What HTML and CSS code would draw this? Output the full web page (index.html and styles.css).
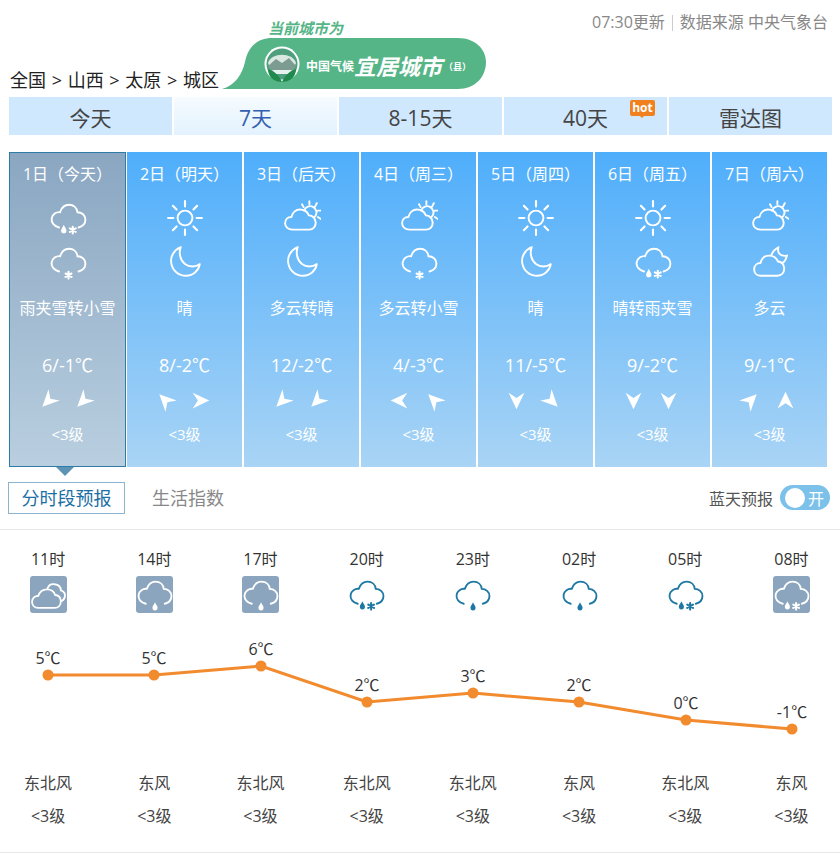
FILE: index.html
```html
<!DOCTYPE html>
<html lang="zh-CN">
<head>
    <meta charset="UTF-8">
    <title>城区天气预报</title>
    <link rel="stylesheet" href="styles.css">
</head>
<body>
    <svg class="sprite" width="0" height="0">
        <defs>
            <path id="cloud-open" d="M9.500 27 C5 26 2 22.500 2.500 18.500 C3 14.500 7 12 10.500 12.500 C12 8 15 5.500 19 5.500 C23.500 5.500 26.500 8.500 27 12.500 C31 12.500 34.500 15.500 34.500 19.500 C34.500 23 32 26 28 27" fill="none" stroke="currentColor" stroke-width="1.800" stroke-linecap="round"/>
            <path id="drop" d="M0 -4.500 C1 -2 2.500 -0.800 2.500 1 A2.500 2.500 0 0 1 -2.500 1 C-2.500 -0.800 -1 -2 0 -4.500 Z" fill="currentColor"/>
            <path id="flake" d="M0 -3.200 V3.200 M-2.800 -1.600 L2.800 1.600 M-2.800 1.600 L2.800 -1.600" fill="none" stroke="currentColor" stroke-width="2" stroke-linecap="round"/>
            <symbol id="i-rain-snow" viewBox="0 0 36 36">
                <use href="#cloud-open"/>
                <use href="#drop" x="14" y="29"/>
                <use href="#flake" x="22.500" y="29.500"/>
            </symbol>
            <symbol id="i-rain" viewBox="0 0 36 36">
                <use href="#cloud-open"/>
                <use href="#drop" x="18.500" y="30"/>
            </symbol>
            <symbol id="i-snow" viewBox="0 0 36 36">
                <use href="#cloud-open"/>
                <use href="#flake" x="18.500" y="30.500"/>
            </symbol>
            <symbol id="i-sun" viewBox="0 0 36 36">
                <circle cx="18" cy="18" r="7" fill="none" stroke="currentColor" stroke-width="1.800"/>
                <path d="M18 2 V7 M18 29 V34 M2 18 H7 M29 18 H34 M6.500 6.500 L10 10 M26 26 L29.500 29.500 M6.500 29.500 L10 26 M26 10 L29.500 6.500" fill="none" stroke="currentColor" stroke-width="2" stroke-linecap="round"/>
            </symbol>
            <symbol id="i-moon" viewBox="0 0 36 36">
                <path d="M14 4 C7 7 4 13 5 19 C6 26 12 31 19 31 C26 31 31 26 32 20 C28 23 22 23 18 20 C13 16 12 9 14 4 Z" fill="none" stroke="currentColor" stroke-width="1.800" stroke-linejoin="round"/>
            </symbol>
            <symbol id="i-cloudy-day" viewBox="0 0 36 36">
                <path d="M9 29 C4.500 29 2 26 2 23 C2 19.500 4.500 17 8 17 C9 12.500 12.500 10 16 10 C20 10 23 12 24.500 15.500 C28 15.500 31 18.500 31 22.500 C31 26 28.500 29 25 29 Z" fill="none" stroke="currentColor" stroke-width="1.800" stroke-linejoin="round"/>
                <path d="M20 11 A6 6 0 1 1 30 17 M25 2 V5 M18 5 L19.500 7.500 M32 4 L30.500 7 M36 11 H33 M36 19 L33 17" fill="none" stroke="currentColor" stroke-width="1.800" stroke-linecap="round"/>
            </symbol>
            <symbol id="i-cloudy-night" viewBox="0 0 36 36">
                <path d="M9 31 C5 31 3 28 3 25 C3 21.500 5.500 19 9 19 C10 14.500 13 12 17 12 C21 12 24 14 25.500 17.500 C29 17.500 31.500 20.500 31.500 24 C31.500 28 29 31 25 31 Z" fill="none" stroke="currentColor" stroke-width="1.800" stroke-linejoin="round"/>
                <path d="M26 4 C24.500 9 27.500 13 34 12 C33 16 31 18.500 29 19 M26 4 C22.500 6 20.500 8 19.500 11" fill="none" stroke="currentColor" stroke-width="1.800" stroke-linecap="round"/>
            </symbol>
            <symbol id="i-overcast" viewBox="0 0 36 36">
                <path d="M8 31 C4 31 2 28 2 25 C2 21.500 5 19 8 19.500 C9.500 15 13 13 16.500 13 C20.500 13 23.500 15.500 24.500 18.500 C28 18.500 30 21.500 30 24.500 C30 28.500 27.500 31 24 31 Z" fill="none" stroke="currentColor" stroke-width="1.800" stroke-linejoin="round"/>
                <path d="M17 12.500 C18 9 21 7.500 24 8 C28 8.500 30 11 30 14 C33 15 34.500 17 34 20 C33.500 22.500 32 24 30 24.500" fill="none" stroke="currentColor" stroke-width="1.800" stroke-linecap="round"/>
            </symbol>
            <symbol id="i-wind" viewBox="0 0 24 24">
                <polygon points="22,12 3,3 9,12 3,21" fill="currentColor"/>
            </symbol>
        </defs>
    </svg>

    <header class="top">
        <div class="crumbs">全国 &gt; 山西 &gt; 太原 &gt; 城区</div>
        <div class="badge">
            <div class="badge-title">当前城市为</div>
            <div class="badge-body">
                <svg class="badge-shape" width="264" height="51" viewBox="0 0 264 51">
                    <path d="M0 51 C14 47 20 36 23 24 C26 9 35 0 50 0 H236 C253 0 264 11 264 24 C264 39 253 51 236 51 Z" fill="#56b587"/>
                </svg>
                <svg class="emblem" width="36" height="38" viewBox="0 0 36 38">
                    <circle cx="18" cy="19" r="17.500" fill="#fff"/>
                    <circle cx="18" cy="19" r="15.500" fill="#4f9f7c"/>
                    <path d="M4 18 C7 7 29 7 32 18 L29 25 H7 Z" fill="#dbe8e2"/>
                    <path d="M4 21 L12 14 L18 18 L25 13 L32 21 L28 27 H8 Z" fill="#7c9c92"/>
                    <path d="M8 25 H28 L24 29 H12 Z" fill="#e6f0ec"/>
                    <path d="M4 24 C10 26 15 30 18 37 C9 37 4 31 4 24 Z M32 24 C26 26 21 30 18 37 C27 37 32 31 32 24 Z" fill="#1f8a4c"/>
                </svg>
                <span class="badge-small">中国气候</span>
                <span class="badge-big">宜居城市</span>
                <span class="badge-tiny">（县）</span>
            </div>
        </div>
        <div class="meta">07:30更新<i></i>数据来源 中央气象台</div>
    </header>

    <nav class="tabs">
        <a>今天</a>
        <a class="on">7天</a>
        <a>8-15天</a>
        <a class="hot-tab">40天<span class="hot">hot</span></a>
        <a>雷达图</a>
    </nav>

    <ul class="days">
        <li class="day today">
            <h3>1日（今天）</h3>
            <svg class="wea"><use href="#i-rain-snow"/></svg>
            <svg class="wea"><use href="#i-snow"/></svg>
            <p class="desc">雨夹雪转小雪</p>
            <p class="temp">6/-1℃</p>
            <div class="winds"><svg class="sw"><use href="#i-wind"/></svg><svg class="sw"><use href="#i-wind"/></svg></div>
            <p class="lvl">&lt;3级</p>
        </li>
        <li class="day">
            <h3>2日（明天）</h3>
            <svg class="wea"><use href="#i-sun"/></svg>
            <svg class="wea"><use href="#i-moon"/></svg>
            <p class="desc">晴</p>
            <p class="temp">8/-2℃</p>
            <div class="winds"><svg class="nw"><use href="#i-wind"/></svg><svg class="e"><use href="#i-wind"/></svg></div>
            <p class="lvl">&lt;3级</p>
        </li>
        <li class="day">
            <h3>3日（后天）</h3>
            <svg class="wea"><use href="#i-cloudy-day"/></svg>
            <svg class="wea"><use href="#i-moon"/></svg>
            <p class="desc">多云转晴</p>
            <p class="temp">12/-2℃</p>
            <div class="winds"><svg class="sw"><use href="#i-wind"/></svg><svg class="sw"><use href="#i-wind"/></svg></div>
            <p class="lvl">&lt;3级</p>
        </li>
        <li class="day">
            <h3>4日（周三）</h3>
            <svg class="wea"><use href="#i-cloudy-day"/></svg>
            <svg class="wea"><use href="#i-snow"/></svg>
            <p class="desc">多云转小雪</p>
            <p class="temp">4/-3℃</p>
            <div class="winds"><svg class="w"><use href="#i-wind"/></svg><svg class="nw"><use href="#i-wind"/></svg></div>
            <p class="lvl">&lt;3级</p>
        </li>
        <li class="day">
            <h3>5日（周四）</h3>
            <svg class="wea"><use href="#i-sun"/></svg>
            <svg class="wea"><use href="#i-moon"/></svg>
            <p class="desc">晴</p>
            <p class="temp">11/-5℃</p>
            <div class="winds"><svg class="s"><use href="#i-wind"/></svg><svg class="se"><use href="#i-wind"/></svg></div>
            <p class="lvl">&lt;3级</p>
        </li>
        <li class="day">
            <h3>6日（周五）</h3>
            <svg class="wea"><use href="#i-sun"/></svg>
            <svg class="wea"><use href="#i-rain-snow"/></svg>
            <p class="desc">晴转雨夹雪</p>
            <p class="temp">9/-2℃</p>
            <div class="winds"><svg class="s"><use href="#i-wind"/></svg><svg class="s"><use href="#i-wind"/></svg></div>
            <p class="lvl">&lt;3级</p>
        </li>
        <li class="day">
            <h3>7日（周六）</h3>
            <svg class="wea"><use href="#i-cloudy-day"/></svg>
            <svg class="wea"><use href="#i-cloudy-night"/></svg>
            <p class="desc">多云</p>
            <p class="temp">9/-1℃</p>
            <div class="winds"><svg class="ne"><use href="#i-wind"/></svg><svg class="n"><use href="#i-wind"/></svg></div>
            <p class="lvl">&lt;3级</p>
        </li>
    </ul>

    <div class="subbar">
        <a class="sub on">分时段预报</a>
        <a class="sub">生活指数</a>
        <div class="sky">
            <span>蓝天预报</span>
            <div class="toggle"><b></b>开</div>
        </div>
    </div>

    <section class="hours">
        <div class="row row-time">
            <span>11时</span><span>14时</span><span>17时</span><span>20时</span><span>23时</span><span>02时</span><span>05时</span><span>08时</span>
        </div>
        <div class="row row-icon">
            <svg class="tile"><use href="#i-overcast"/></svg>
            <svg class="tile"><use href="#i-rain"/></svg>
            <svg class="tile"><use href="#i-rain"/></svg>
            <svg class="line-icon"><use href="#i-rain-snow"/></svg>
            <svg class="line-icon"><use href="#i-rain"/></svg>
            <svg class="line-icon"><use href="#i-rain"/></svg>
            <svg class="line-icon"><use href="#i-rain-snow"/></svg>
            <svg class="tile"><use href="#i-rain-snow"/></svg>
        </div>
        <svg class="chart" width="840" height="130" viewBox="0 0 840 130">
            <polyline points="48,50 154,50 261,41 367,77 473,68 579,77 686,95 792,104" fill="none" stroke="#f28a2e" stroke-width="3"/>
            <g fill="#f28a2e">
                <circle cx="48" cy="50" r="5.500"/>
                <circle cx="154" cy="50" r="5.500"/>
                <circle cx="261" cy="41" r="5.500"/>
                <circle cx="367" cy="77" r="5.500"/>
                <circle cx="473" cy="68" r="5.500"/>
                <circle cx="579" cy="77" r="5.500"/>
                <circle cx="686" cy="95" r="5.500"/>
                <circle cx="792" cy="104" r="5.500"/>
            </g>
            <g class="chart-label" text-anchor="middle">
                <text x="48" y="39">5℃</text>
                <text x="154" y="39">5℃</text>
                <text x="261" y="30">6℃</text>
                <text x="367" y="66">2℃</text>
                <text x="473" y="57">3℃</text>
                <text x="579" y="66">2℃</text>
                <text x="686" y="84">0℃</text>
                <text x="792" y="93">-1℃</text>
            </g>
        </svg>
        <div class="row row-wind">
            <span>东北风</span><span>东风</span><span>东北风</span><span>东北风</span><span>东北风</span><span>东风</span><span>东北风</span><span>东风</span>
        </div>
        <div class="row row-lvl">
            <span>&lt;3级</span><span>&lt;3级</span><span>&lt;3级</span><span>&lt;3级</span><span>&lt;3级</span><span>&lt;3级</span><span>&lt;3级</span><span>&lt;3级</span>
        </div>
    </section>
</body>
</html>
```

FILE: styles.css
```css
* {
    box-sizing: border-box;
}
html, body {
    overflow: hidden;
}
body {
    margin: 0;
    height: 853px;
    font-family: "Open Sans", "Noto Sans CJK SC", sans-serif;
    color: #333;
    background: white;
}
ul, p, h3 {
    margin: 0;
    padding: 0;
    font-weight: normal;
}
.sprite {
    display: block;
    height: 0;
}

/* top */
.top {
    display: flex;
    height: 97px;
    padding: 0 12px 8px 10px;
}
.crumbs {
    align-self: flex-end;
    width: 212px;
    margin-bottom: -3px;
    font-size: 18px;
    line-height: 24px;
    word-spacing: 1px;
    color: #222;
    white-space: nowrap;
}
.badge {
    width: 264px;
}
.badge-title {
    height: 38px;
    padding: 19px 0 0 46px;
    font-size: 15px;
    line-height: 18px;
    font-weight: bold;
    font-style: italic;
    color: #56b587;
}
.badge-body {
    position: relative;
    display: flex;
    align-items: center;
    height: 51px;
    padding: 2px 0 0 84px;
    color: white;
    white-space: nowrap;
}
.badge-shape {
    position: absolute;
    left: 0;
    top: 0;
}
.emblem {
    position: absolute;
    left: 42px;
    top: 7px;
}
.badge-small, .badge-big, .badge-tiny {
    position: relative;
    font-weight: bold;
}
.badge-small {
    margin-top: 3px;
    font-size: 12px;
}
.badge-big {
    font-size: 22px;
    font-style: italic;
}
.badge-tiny {
    margin: 3px 0 0 2px;
    font-size: 9px;
}
.meta {
    margin-left: auto;
    padding-top: 11px;
    font-size: 16px;
    line-height: 22px;
    color: #888;
    white-space: nowrap;
}
.meta i {
    display: inline-block;
    width: 1px;
    height: 16px;
    margin: 0 7px;
    vertical-align: -3px;
    background: #ccc;
}

/* tabs */
.tabs {
    display: flex;
    gap: 2px;
    height: 38px;
    margin: 0 8px 0 9px;
}
.tabs a {
    position: relative;
    flex: 1;
    font-size: 21px;
    line-height: 42px;
    text-align: center;
    color: #444;
    background: #cfe8fd;
}
.tabs a.on {
    color: #3360b0;
    background: linear-gradient(#f6fbff, #e2f2fe);
}
.hot {
    position: absolute;
    top: 3px;
    left: 126px;
    width: 25px;
    height: 16px;
    border-radius: 2px;
    font-size: 12px;
    line-height: 15px;
    font-weight: bold;
    color: white;
    background: #f0811e;
}
.hot::after {
    content: "";
    position: absolute;
    left: 9px;
    top: 15px;
    border: 3px solid transparent;
    border-top-color: #f0811e;
    border-bottom: 0;
}

/* 7 days */
.days {
    display: flex;
    gap: 2px;
    list-style: none;
    height: 315px;
    margin: 17px 12px 0 9px;
    color: white;
}
.day {
    position: relative;
    display: flex;
    flex-direction: column;
    align-items: center;
    flex: 0 0 115px;
    padding-top: 11px;
    background: linear-gradient(#4faefb, #a9d4f5);
}
.day.today {
    flex-basis: 117px;
    margin-right: -1px;
    border: 1px solid #2d7ba6;
    padding-top: 10px;
    background: linear-gradient(#8aa6c1, #b9cfe0);
}
.day.today::after {
    content: "";
    position: absolute;
    left: 46px;
    bottom: -10px;
    border: 9px solid transparent;
    border-top-color: #5d93b5;
    border-bottom: 0;
}
.day h3 {
    font-size: 16px;
    line-height: 22px;
    white-space: nowrap;
}
.wea {
    flex: none;
    width: 38px;
    height: 38px;
    margin-top: 14px;
}
.wea + .wea {
    margin-top: 6px;
}
.desc {
    margin-top: 15px;
    font-size: 16px;
    line-height: 24px;
    white-space: nowrap;
}
.temp {
    margin-top: 32px;
    font-size: 18px;
    line-height: 26px;
}
.winds {
    display: flex;
    gap: 14px;
    margin: 12px 0 0 -3px;
}
.winds svg {
    width: 21px;
    height: 21px;
}
.e { transform: rotate(0deg); }
.se { transform: rotate(45deg); }
.s { transform: rotate(90deg); }
.sw { transform: rotate(135deg); }
.w { transform: rotate(180deg); }
.nw { transform: rotate(-135deg); }
.n { transform: rotate(-90deg); }
.ne { transform: rotate(-45deg); }
.lvl {
    margin-top: 12px;
    font-size: 15px;
    line-height: 22px;
}

/* sub tabs */
.subbar {
    display: flex;
    align-items: center;
    height: 48px;
    margin-top: 15px;
    padding: 0 10px 16px 8px;
    border-bottom: 1px solid #e8e8e8;
}
.sub {
    font-size: 18px;
    line-height: 30px;
    color: #888;
    margin-left: 27px;
}
.sub.on {
    width: 117px;
    height: 32px;
    margin-left: 0;
    border: 1px solid #8ab4d0;
    text-align: center;
    color: #1b6fa3;
}
.sky {
    display: flex;
    align-items: center;
    gap: 7px;
    margin-left: auto;
    font-size: 16px;
    color: #555;
}
.toggle {
    display: flex;
    align-items: center;
    gap: 3px;
    width: 50px;
    height: 25px;
    padding-left: 5px;
    border-radius: 13px;
    font-size: 16px;
    color: white;
    background: #7cc1ea;
}
.toggle b {
    width: 20px;
    height: 20px;
    border-radius: 50%;
    background: white;
}

/* hours */
.hours {
    height: 323px;
    border-bottom: 1px solid #e8e8e8;
}
.row {
    display: grid;
    grid-template-columns: repeat(8, 106.2px);
    justify-items: center;
    align-items: center;
    margin: 0 -5px;
}
.row-time {
    padding-top: 17px;
    font-size: 16px;
    line-height: 24px;
}
.row-icon {
    padding-top: 5px;
    color: white;
}
.tile, .line-icon {
    display: block;
    width: 37px;
    height: 37px;
}
.tile {
    border-radius: 3px;
    background: #8ba5be;
}
.line-icon {
    color: #1f78a3;
}
.chart {
    display: block;
    margin-top: 12px;
}
.chart-label {
    font-size: 16px;
    fill: #333;
}
.row-wind {
    margin-top: 17px;
    font-size: 16px;
    line-height: 22px;
    color: #444;
}
.row-lvl {
    margin-top: 11px;
    font-size: 16px;
    line-height: 22px;
    color: #444;
}
```
